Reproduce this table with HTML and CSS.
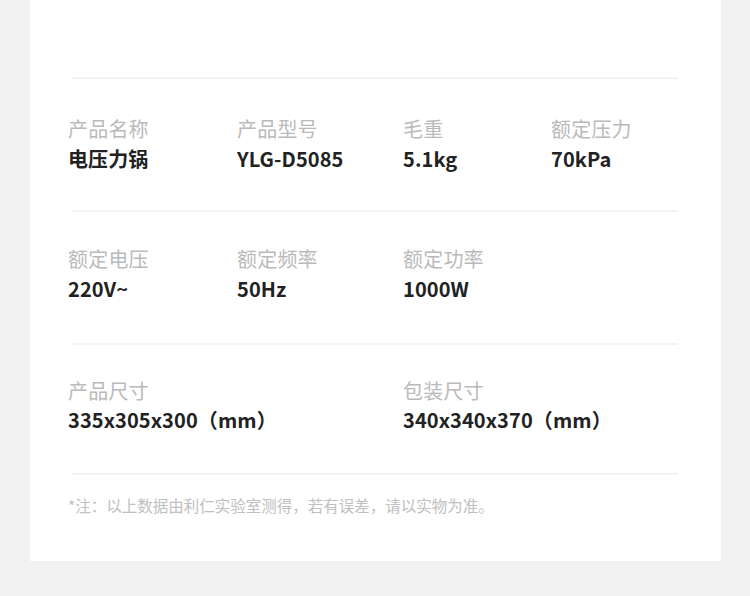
FILE: index.html
```html
<!DOCTYPE html>
<html lang="zh">
<head>
<meta charset="utf-8">
<link rel="stylesheet" href="styles.css">
</head>
<body>
<div class="card">
  <div class="divider"></div>
  <div class="row row1">
    <div class="cell"><div class="label">产品名称</div><div class="value">电压力锅</div></div>
    <div class="cell"><div class="label">产品型号</div><div class="value">YLG-D5085</div></div>
    <div class="cell"><div class="label">毛重</div><div class="value">5.1kg</div></div>
    <div class="cell"><div class="label">额定压力</div><div class="value">70kPa</div></div>
  </div>
  <div class="divider"></div>
  <div class="row row2">
    <div class="cell"><div class="label">额定电压</div><div class="value">220V~</div></div>
    <div class="cell"><div class="label">额定频率</div><div class="value">50Hz</div></div>
    <div class="cell"><div class="label">额定功率</div><div class="value">1000W</div></div>
  </div>
  <div class="divider"></div>
  <div class="row row3">
    <div class="cell span2"><div class="label">产品尺寸</div><div class="value">335x305x300（mm）</div></div>
    <div class="cell span2"><div class="label">包装尺寸</div><div class="value">340x340x370（mm）</div></div>
  </div>
  <div class="divider"></div>
  <p class="note">*注：以上数据由利仁实验室测得，若有误差，请以实物为准。</p>
</div>
</body>
</html>
```

FILE: styles.css
```css
html, body {
  margin: 0;
  padding: 0;
  background: #f1f1f1;
  font-family: "Noto Sans CJK SC", "Noto Sans", sans-serif;
}

.card {
  margin-left: 30px;
  width: 691px;
  height: 561px;
  box-sizing: border-box;
  background: #ffffff;
  padding: 77px 43px 0 38px;
}

.divider {
  height: 2px;
  margin-left: 3px;
  background: #f3f3f3;
}

.row {
  display: grid;
  grid-template-columns: 169px 166px 148px 1fr;
}

.row1 {
  padding: 35px 0 36px;
}

.row2 {
  padding: 32px 0 39px;
}

.row3 {
  padding: 31px 0 38px;
}

.row3 .value {
  margin-top: -1px;
}

.span2 {
  grid-column: span 2;
}

.label {
  font-size: 20px;
  line-height: 30px;
  color: #bababa;
  font-weight: 400;
  letter-spacing: 0.2px;
}

.value {
  font-size: 20px;
  line-height: 30px;
  color: #222222;
  font-weight: 700;
  letter-spacing: 0.1px;
}

.note {
  margin: 20px 0 0;
  font-size: 15.5px;
  line-height: 20px;
  color: #c0c0c0;
}
```
